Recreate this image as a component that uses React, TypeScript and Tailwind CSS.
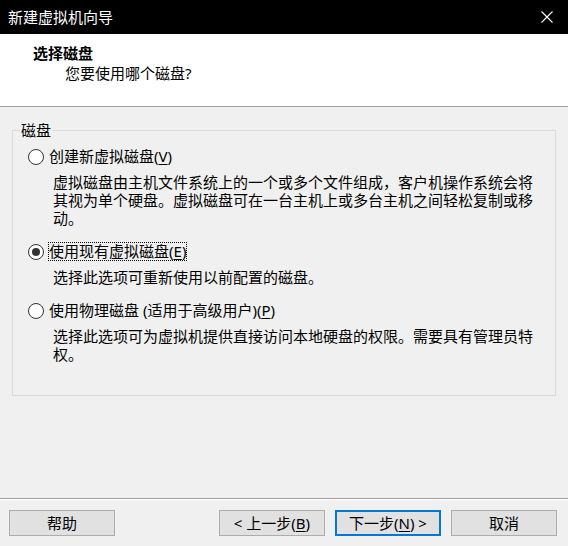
import React from 'react';

const font = { fontFamily: '"Noto Sans", "Noto Sans CJK SC", sans-serif' };

const Radio = ({ checked }: { checked?: boolean }) => (
    <span className="w-[16px] h-[16px] rounded-full border border-[#333333] bg-white flex items-center justify-center shrink-0">
        {checked && <span className="w-[8px] h-[8px] rounded-full bg-[#333333]" />}
    </span>
);

const Option = ({
    label,
    mnemonic,
    checked,
    focused,
    lines,
}: {
    label: string;
    mnemonic: string;
    checked?: boolean;
    focused?: boolean;
    lines: string[];
}) => (
    <div className="flex flex-col">
        <div className="flex items-center pl-[15px] gap-[4px]">
            <Radio checked={checked} />
            <span
                className={`leading-[17px] border ${focused ? 'border-dotted border-black' : 'border-transparent'}`}
            >
                {label}(<span className="underline underline-offset-2">{mnemonic}</span>)
            </span>
        </div>
        <div className="mt-[7px] pl-[40px] leading-[18px]">
            {lines.map(line => (
                <div key={line} className="whitespace-nowrap">{line}</div>
            ))}
        </div>
    </div>
);

const Button = ({ children, primary }: { children: React.ReactNode; primary?: boolean }) => (
    <div
        className={`w-[106px] h-[26px] bg-[#e1e1e1] flex items-center justify-center leading-none ${
            primary ? 'border-2 border-[#0078d7]' : 'border border-[#adadad]'
        }`}
    >
        {children}
    </div>
);

export default function App() {
    return (
        <div className="w-[568px] h-[546px] flex flex-col text-[15px] text-black bg-[#f0f0f0]" style={font}>
            {/* Title bar */}
            <div className="h-[34px] bg-black text-white flex items-center justify-between pl-[8px] pr-[15px]">
                <span className="leading-[18px]">新建虚拟机向导</span>
                <svg width="12" height="12" viewBox="0 0 12 12">
                    <path d="M0.5 0.5 L11.5 11.5 M11.5 0.5 L0.5 11.5" stroke="white" strokeWidth="1.1" fill="none" />
                </svg>
            </div>

            {/* Header */}
            <div className="h-[73px] bg-white border-b border-[#a0a0a0] pt-[10px] leading-[18px]">
                <div className="pl-[33px] font-bold">选择磁盘</div>
                <div className="pl-[65px] mt-[2px]">您要使用哪个磁盘?</div>
            </div>

            {/* Body */}
            <div className="flex-1 px-[12px] pt-[23px]">
                <div className="relative h-[266px] border border-[#dcdcdc] pt-[16px] flex flex-col gap-[15px]">
                    <span className="absolute -top-[10px] left-[7px] px-[1px] bg-[#f0f0f0] leading-[18px]">磁盘</span>
                    <Option
                        label="创建新虚拟磁盘"
                        mnemonic="V"
                        lines={[
                            '虚拟磁盘由主机文件系统上的一个或多个文件组成，客户机操作系统会将',
                            '其视为单个硬盘。虚拟磁盘可在一台主机上或多台主机之间轻松复制或移',
                            '动。',
                        ]}
                    />
                    <Option
                        label="使用现有虚拟磁盘"
                        mnemonic="E"
                        checked
                        focused
                        lines={['选择此选项可重新使用以前配置的磁盘。']}
                    />
                    <Option
                        label="使用物理磁盘 (适用于高级用户)"
                        mnemonic="P"
                        lines={[
                            '选择此选项可为虚拟机提供直接访问本地硬盘的权限。需要具有管理员特',
                            '权。',
                        ]}
                    />
                </div>
            </div>

            {/* Footer */}
            <div className="h-[48px] border-t border-[#a0a0a0]">
                <div className="h-full border-t border-white pt-[10px] pl-[9px] pr-[11px] flex items-start justify-between">
                    <Button>帮助</Button>
                    <div className="flex gap-[10px]">
                        <Button>
                            &lt; 上一步(<span className="underline underline-offset-2">B</span>)
                        </Button>
                        <Button primary>
                            下一步(<span className="underline underline-offset-2">N</span>) &gt;
                        </Button>
                        <Button>取消</Button>
                    </div>
                </div>
            </div>
        </div>
    );
}
